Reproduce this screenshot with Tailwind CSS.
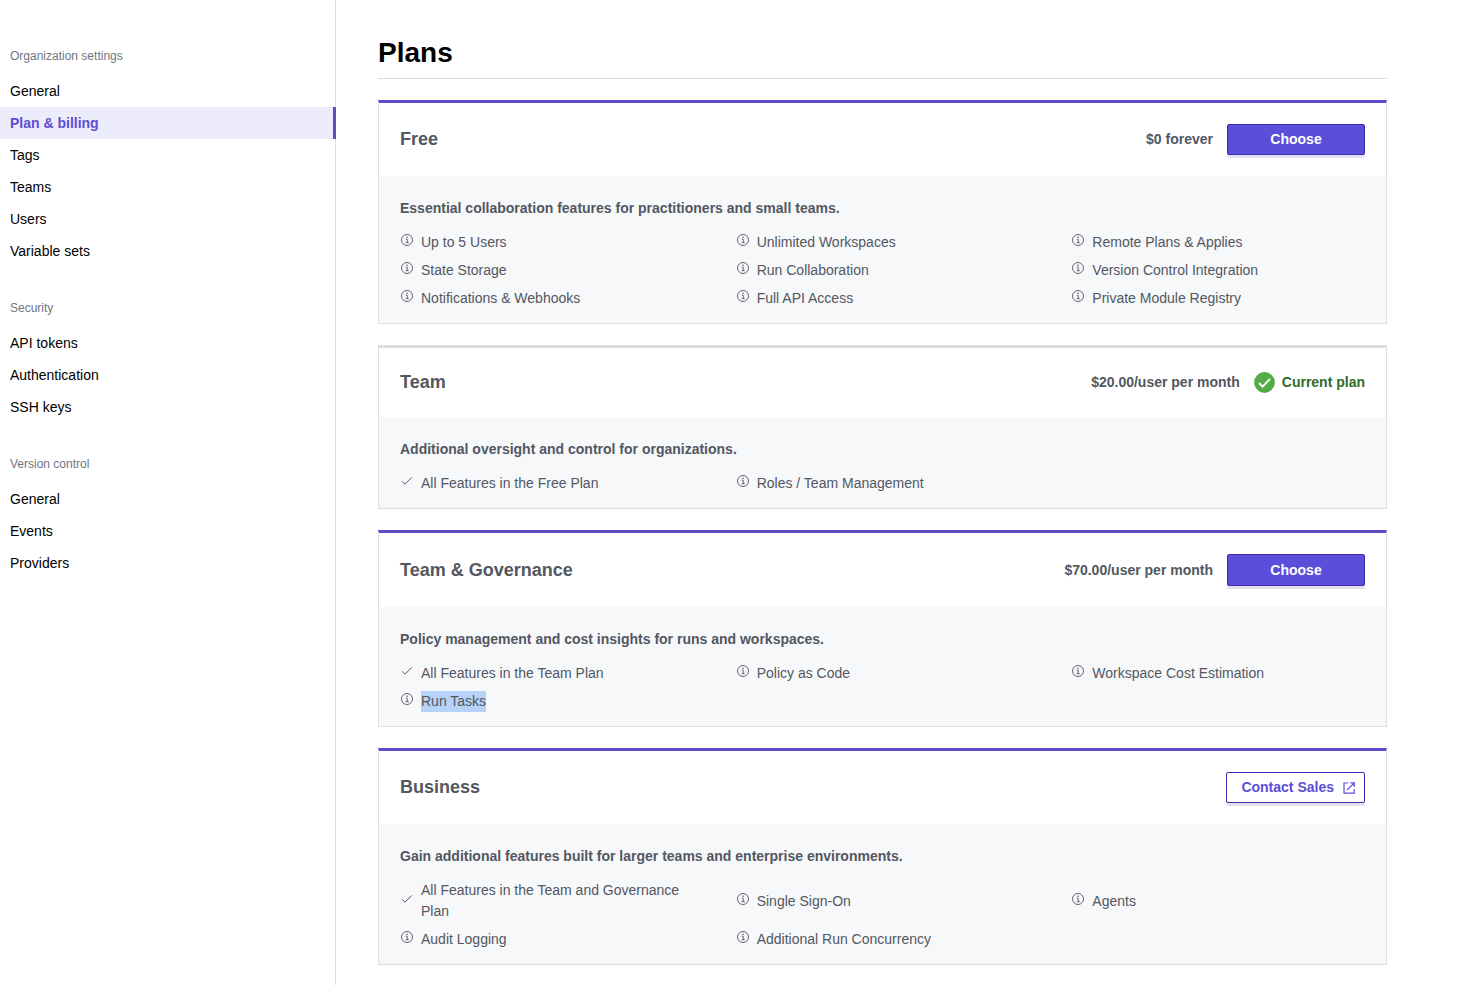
<!DOCTYPE html>
<html lang="en">
<head>
    <meta charset="UTF-8">
    <meta name="viewport" content="width=device-width, initial-scale=1.0">
    <title>Plan &amp; billing</title>
    <script src="https://cdn.jsdelivr.net/npm/@tailwindcss/browser@4"></script>
</head>
<body class="bg-white font-['Liberation_Sans',Arial,sans-serif] text-sm text-black">
    <!-- Shared icons -->
    <svg class="hidden" aria-hidden="true">
        <symbol id="info" viewBox="0 0 14 14">
            <circle cx="7" cy="7" r="5.5" fill="none" stroke="currentColor" stroke-width=".9" />
            <path d="M5.8 6.2h1.4v3.5M5.6 9.7h3.2" fill="none" stroke="currentColor" stroke-width=".9" />
            <circle cx="7" cy="4.2" r=".8" fill="currentColor" />
        </symbol>
        <symbol id="check" viewBox="0 0 14 14">
            <path d="M2.2 7.5 5 10.2 11.8 3.4" fill="none" stroke="currentColor" />
        </symbol>
    </svg>

    <div class="flex min-h-screen">
        <!-- Sidebar -->
        <nav class="w-[336px] shrink-0 border-r border-[#dcdee3] pt-[47px] flex flex-col gap-8">
            <div>
                <h2 class="px-[10px] mb-[10px] text-xs leading-[18px] text-[#6f7682]">Organization settings</h2>
                <ul class="leading-8">
                    <li><a href="#" class="block px-[10px]">General</a></li>
                    <li><a href="#" class="block px-[10px] -mr-px border-r-3 border-[#5c4ec9] bg-[#edecfa] font-bold text-[#5c4ed6]">Plan &amp; billing</a></li>
                    <li><a href="#" class="block px-[10px]">Tags</a></li>
                    <li><a href="#" class="block px-[10px]">Teams</a></li>
                    <li><a href="#" class="block px-[10px]">Users</a></li>
                    <li><a href="#" class="block px-[10px]">Variable sets</a></li>
                </ul>
            </div>
            <div>
                <h2 class="px-[10px] mb-[10px] text-xs leading-[18px] text-[#6f7682]">Security</h2>
                <ul class="leading-8">
                    <li><a href="#" class="block px-[10px]">API tokens</a></li>
                    <li><a href="#" class="block px-[10px]">Authentication</a></li>
                    <li><a href="#" class="block px-[10px]">SSH keys</a></li>
                </ul>
            </div>
            <div>
                <h2 class="px-[10px] mb-[10px] text-xs leading-[18px] text-[#6f7682]">Version control</h2>
                <ul class="leading-8">
                    <li><a href="#" class="block px-[10px]">General</a></li>
                    <li><a href="#" class="block px-[10px]">Events</a></li>
                    <li><a href="#" class="block px-[10px]">Providers</a></li>
                </ul>
            </div>
        </nav>

        <!-- Plans -->
        <main class="flex-1 pt-8 pb-5 pl-[42px] pr-[77px] flex flex-col gap-[21px] leading-[21px] text-[#525761]">
            <h1 class="pb-1 border-b border-[#dcdee3] text-[28px] leading-[42px] font-bold text-black">Plans</h1>

            <section class="border border-t-3 border-[#dcdee3] border-t-[#5c4ec9]">
                <div class="flex items-center justify-between p-[21px]">
                    <h2 class="text-lg leading-[27px] font-bold">Free</h2>
                    <div class="flex items-center gap-[14px] font-bold">
                        <span>$0 forever</span>
                        <button type="button" class="w-[138px] h-[31px] rounded-xs border border-[#3f2db0] bg-[#5a4edb] font-bold text-white shadow-[0_3px_0_#e3e2f4]">Choose</button>
                    </div>
                </div>
                <div class="bg-[#f7f8fa] pt-[22px] pb-[14px]">
                    <p class="px-[21px] mb-[13px] font-bold">Essential collaboration features for practitioners and small teams.</p>
                    <ul class="grid grid-cols-3 gap-y-[7px]">
                        <li class="flex items-center gap-[7px] px-[21px]"><svg class="size-[14px] shrink-0 mb-[5px]"><use href="#info" /></svg><span>Up to 5 Users</span></li>
                        <li class="flex items-center gap-[7px] px-[21px]"><svg class="size-[14px] shrink-0 mb-[5px]"><use href="#info" /></svg><span>Unlimited Workspaces</span></li>
                        <li class="flex items-center gap-[7px] px-[21px]"><svg class="size-[14px] shrink-0 mb-[5px]"><use href="#info" /></svg><span>Remote Plans &amp; Applies</span></li>
                        <li class="flex items-center gap-[7px] px-[21px]"><svg class="size-[14px] shrink-0 mb-[5px]"><use href="#info" /></svg><span>State Storage</span></li>
                        <li class="flex items-center gap-[7px] px-[21px]"><svg class="size-[14px] shrink-0 mb-[5px]"><use href="#info" /></svg><span>Run Collaboration</span></li>
                        <li class="flex items-center gap-[7px] px-[21px]"><svg class="size-[14px] shrink-0 mb-[5px]"><use href="#info" /></svg><span>Version Control Integration</span></li>
                        <li class="flex items-center gap-[7px] px-[21px]"><svg class="size-[14px] shrink-0 mb-[5px]"><use href="#info" /></svg><span>Notifications &amp; Webhooks</span></li>
                        <li class="flex items-center gap-[7px] px-[21px]"><svg class="size-[14px] shrink-0 mb-[5px]"><use href="#info" /></svg><span>Full API Access</span></li>
                        <li class="flex items-center gap-[7px] px-[21px]"><svg class="size-[14px] shrink-0 mb-[5px]"><use href="#info" /></svg><span>Private Module Registry</span></li>
                    </ul>
                </div>
            </section>

            <section class="border border-t-3 border-[#dcdee3]">
                <div class="flex items-center justify-between p-[21px]">
                    <h2 class="text-lg leading-[27px] font-bold">Team</h2>
                    <div class="flex items-center gap-[14px] font-bold">
                        <span>$20.00/user per month</span>
                        <span class="flex items-center gap-[7px] text-[#2f6b2b]">
                            <svg class="size-[21px]" viewBox="0 0 21 21">
                                <circle cx="10.5" cy="10.5" r="10.4" fill="#53ab48" />
                                <path d="M5 11 8.6 14.6 16 6.9" fill="none" stroke="#fff" stroke-width="1.9" />
                            </svg>
                            Current plan
                        </span>
                    </div>
                </div>
                <div class="bg-[#f7f8fa] pt-[22px] pb-[14px]">
                    <p class="px-[21px] mb-[13px] font-bold">Additional oversight and control for organizations.</p>
                    <ul class="grid grid-cols-3 gap-y-[7px]">
                        <li class="flex items-center gap-[7px] px-[21px]"><svg class="size-[14px] shrink-0 mb-[5px]"><use href="#check" /></svg><span>All Features in the Free Plan</span></li>
                        <li class="flex items-center gap-[7px] px-[21px]"><svg class="size-[14px] shrink-0 mb-[5px]"><use href="#info" /></svg><span>Roles / Team Management</span></li>
                    </ul>
                </div>
            </section>

            <section class="border border-t-3 border-[#dcdee3] border-t-[#5c4ec9]">
                <div class="flex items-center justify-between p-[21px]">
                    <h2 class="text-lg leading-[27px] font-bold">Team &amp; Governance</h2>
                    <div class="flex items-center gap-[14px] font-bold">
                        <span>$70.00/user per month</span>
                        <button type="button" class="w-[138px] h-8 rounded-xs border border-[#3f2db0] bg-[#5a4edb] font-bold text-white shadow-[0_3px_0_#e3e2ea]">Choose</button>
                    </div>
                </div>
                <div class="bg-[#f7f8fa] pt-[22px] pb-[14px]">
                    <p class="px-[21px] mb-[13px] font-bold">Policy management and cost insights for runs and workspaces.</p>
                    <ul class="grid grid-cols-3 gap-y-[7px]">
                        <li class="flex items-center gap-[7px] px-[21px]"><svg class="size-[14px] shrink-0 mb-[5px]"><use href="#check" /></svg><span>All Features in the Team Plan</span></li>
                        <li class="flex items-center gap-[7px] px-[21px]"><svg class="size-[14px] shrink-0 mb-[5px]"><use href="#info" /></svg><span>Policy as Code</span></li>
                        <li class="flex items-center gap-[7px] px-[21px]"><svg class="size-[14px] shrink-0 mb-[5px]"><use href="#info" /></svg><span>Workspace Cost Estimation</span></li>
                        <li class="flex items-center gap-[7px] px-[21px]"><svg class="size-[14px] shrink-0 mb-[5px]"><use href="#info" /></svg><span class="bg-[#b7d2f8]">Run Tasks</span></li>
                    </ul>
                </div>
            </section>

            <section class="border border-t-3 border-[#dcdee3] border-t-[#5c4ec9]">
                <div class="flex items-center justify-between p-[21px]">
                    <h2 class="text-lg leading-[27px] font-bold">Business</h2>
                    <a href="#" class="flex items-center gap-2 h-[31px] pl-[14px] pr-2 rounded-xs border border-[#3f2db0] bg-white font-bold text-[#5c4ed6] shadow-[0_3px_0_#e3e2f4]">
                        Contact Sales
                        <svg class="size-[14px]" viewBox="0 0 14 14" fill="none" stroke="currentColor" stroke-width="1.2">
                            <path d="M6.2 2H2v10.2h10.2V8M8.2 1.9h4.1V6M12.2 2 5 9.2" />
                        </svg>
                    </a>
                </div>
                <div class="bg-[#f7f8fa] pt-[22px] pb-[14px]">
                    <p class="px-[21px] mb-[13px] font-bold">Gain additional features built for larger teams and enterprise environments.</p>
                    <ul class="grid grid-cols-3 gap-y-[7px]">
                        <li class="flex items-center gap-[7px] px-[21px]"><svg class="size-[14px] shrink-0 mb-[5px]"><use href="#check" /></svg><span>All Features in the Team and Governance Plan</span></li>
                        <li class="flex items-center gap-[7px] px-[21px]"><svg class="size-[14px] shrink-0 mb-[5px]"><use href="#info" /></svg><span>Single Sign-On</span></li>
                        <li class="flex items-center gap-[7px] px-[21px]"><svg class="size-[14px] shrink-0 mb-[5px]"><use href="#info" /></svg><span>Agents</span></li>
                        <li class="flex items-center gap-[7px] px-[21px]"><svg class="size-[14px] shrink-0 mb-[5px]"><use href="#info" /></svg><span>Audit Logging</span></li>
                        <li class="flex items-center gap-[7px] px-[21px]"><svg class="size-[14px] shrink-0 mb-[5px]"><use href="#info" /></svg><span>Additional Run Concurrency</span></li>
                    </ul>
                </div>
            </section>
        </main>
    </div>
</body>
</html>
